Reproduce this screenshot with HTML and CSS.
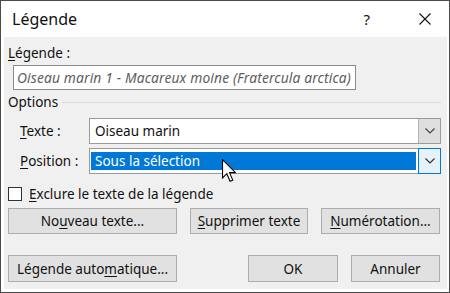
FILE: index.html
```html
<!DOCTYPE html>
<html lang="fr">
<head>
  <meta charset="UTF-8">
  <title>Légende</title>
  <link rel="stylesheet" href="styles.css">
</head>
<body>
  <div class="window">
    <div class="titlebar">
      <span class="title">Légende</span>
      <span class="help">?</span>
      <svg class="close" width="12" height="12" viewBox="0 0 12 12">
        <path d="M0.5 0.5 L11.5 11.5 M11.5 0.5 L0.5 11.5" stroke="#111" stroke-width="1.1" fill="none"/>
      </svg>
    </div>

    <div class="panel">
      <div class="label-row"><u>L</u>égende :</div>
      <div class="caption-box">Oiseau marin 1 - Macareux moine (Fratercula arctica)</div>

      <div class="group-row">
        <span>Options</span>
        <span class="rule"></span>
      </div>

      <div class="field-row">
        <span class="field-label"><u>T</u>exte :</span>
        <div class="combo">
          <span class="combo-value">Oiseau marin</span>
          <span class="combo-btn">
            <svg width="10" height="6" viewBox="0 0 10 6"><polyline points="0.5,0.5 5,5 9.5,0.5" fill="none" stroke="#444" stroke-width="1.2"/></svg>
          </span>
        </div>
      </div>

      <div class="field-row second">
        <span class="field-label"><u>P</u>osition :</span>
        <div class="combo focused">
          <span class="combo-value selected">Sous la sélection</span>
          <span class="combo-btn">
            <svg width="10" height="6" viewBox="0 0 10 6"><polyline points="0.5,0.5 5,5 9.5,0.5" fill="none" stroke="#333" stroke-width="1.2"/></svg>
          </span>
        </div>
      </div>

      <div class="check-row">
        <span class="checkbox"></span>
        <span><u>E</u>xclure le texte de la légende</span>
      </div>

      <div class="btn-row first">
        <button class="btn wide">No<u>u</u>veau texte...</button>
        <button class="btn mid"><u>S</u>upprimer texte</button>
        <button class="btn num"><u>N</u>umérotation...</button>
      </div>

      <div class="btn-row last">
        <button class="btn wide">Légende auto<u>m</u>atique...</button>
        <button class="btn ok">OK</button>
        <button class="btn cancel">Annuler</button>
      </div>
    </div>

    <svg class="cursor" width="14" height="24" viewBox="0 0 13 22">
      <path d="M0.5 0.5 L0.5 17.5 L4.5 13.5 L7.5 20.5 L10 19.5 L7 12.5 L12.5 12.5 Z" fill="#fff" stroke="#000" stroke-width="1" stroke-linejoin="miter"/>
    </svg>
  </div>
</body>
</html>
```

FILE: styles.css
```css
body {
  margin: 0;
  font-family: "Noto Sans", "Open Sans", sans-serif;
  font-size: 13.5px;
  color: #111;
  background: #fff;
}
u {
  text-decoration-thickness: 1px;
  text-underline-offset: 2px;
}
.window {
  position: relative;
  width: 450px;
  height: 293px;
  box-sizing: border-box;
  border: 1px solid #4a4a4a;
  background: #fff;
  display: flex;
  flex-direction: column;
  overflow: hidden;
}
.titlebar {
  height: 36px;
  flex: none;
  display: flex;
  align-items: center;
  padding-left: 11px;
  font-size: 16px;
}
.title {
  flex: 1;
}
.help {
  margin-right: 49px;
  font-size: 15px;
}
.close {
  margin-right: 18px;
}
.panel {
  flex: 1;
  margin: 0 2px 3px 3px;
  padding: 0 6px 0 4px;
  background: #f0f0f0;
}
.label-row {
  margin-top: 6px;
  height: 20px;
  line-height: 20px;
}
.caption-box {
  margin: 2px 0 0 5px;
  width: 343px;
  height: 25px;
  box-sizing: border-box;
  border: 1px solid #8c8c8c;
  background: #fff;
  padding-left: 3px;
  line-height: 23px;
  font-size: 13.8px;
  font-style: italic;
  letter-spacing: 0.15px;
  color: #5e5e5e;
  white-space: nowrap;
  overflow: hidden;
}
.group-row {
  margin-top: 2px;
  height: 20px;
  display: flex;
  align-items: center;
}
.rule {
  flex: 1;
  margin-left: 4px;
  border-top: 1px solid #dadada;
}
.field-row {
  margin-top: 6px;
  height: 26px;
  display: flex;
  align-items: center;
}
.field-row.second {
  margin-top: 4px;
}
.field-label {
  width: 69px;
  padding-left: 12px;
  flex: none;
}
.combo {
  flex: 1;
  height: 26px;
  box-sizing: border-box;
  border: 1px solid #9a9a9a;
  background: #fff;
  display: flex;
  align-items: stretch;
}
.combo-value {
  flex: 1;
  margin: 3px 2px 3px 1px;
  padding-left: 4px;
  line-height: 18px;
}
.combo-value.selected {
  background: #0078d7;
  color: #fff;
}
.combo-btn {
  width: 21px;
  flex: none;
  display: flex;
  align-items: center;
  justify-content: center;
  background: #dedede;
  border-left: 1px solid #b4b4b4;
}
.combo.focused .combo-btn {
  background: #e5f1fb;
  border: 1px solid #0078d7;
  margin: -1px -1px -1px 0;
}
.check-row {
  margin-top: 13px;
  height: 14px;
  display: flex;
  align-items: center;
}
.checkbox {
  width: 14px;
  height: 14px;
  box-sizing: border-box;
  border: 1px solid #333;
  background: #fff;
  margin-right: 7px;
}
.btn-row {
  display: flex;
  padding-right: 1px;
}
.btn-row.first {
  margin-top: 7px;
  height: 26px;
}
.btn-row.last {
  margin-top: 21px;
  height: 27px;
}
.btn {
  font-family: inherit;
  font-size: 13.5px;
  color: #111;
  background: #e1e1e1;
  border: 1px solid #adadad;
  border-radius: 0;
  padding: 0;
  height: 100%;
}
.btn.wide {
  width: 169px;
}
.btn.mid {
  width: 118px;
  margin-left: 13px;
}
.btn.num {
  width: 119px;
  margin-left: 13px;
}
.btn.ok {
  width: 90px;
  margin-left: auto;
}
.btn.cancel {
  width: 89px;
  margin-left: 13px;
}
.cursor {
  position: absolute;
  left: 221px;
  top: 158px;
}
```
